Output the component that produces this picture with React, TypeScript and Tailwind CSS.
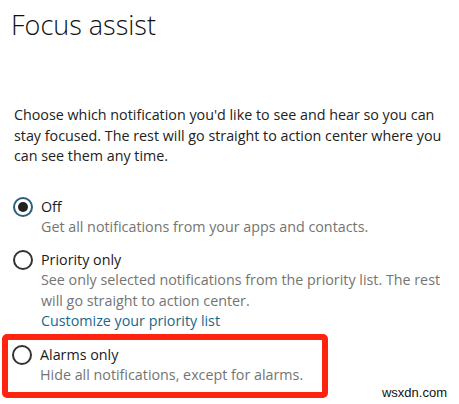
export default function App() {
  return (
    <div
      className="relative w-[459px] h-[404px] overflow-hidden bg-white text-[#1f1f1f]"
      style={{ fontFamily: '"Open Sans", "Noto Sans", sans-serif' }}
    >
      <h1 className="pl-[11px] pt-[5px] text-[27px] leading-[40px] font-light text-[#111]">Focus assist</h1>

      <p className="mt-[60px] pl-[14px] text-[14.3px] leading-[20.5px] text-[#222] whitespace-nowrap">
        Choose which notification you'd like to see and hear so you can
        <br />
        stay focused. The rest will go straight to action center where you
        <br />
        can see them any time.
      </p>

      <div className="mt-[30px] flex flex-col">
        <RadioItem
          checked
          title="Off"
          lines={['Get all notifications from your apps and contacts.']}
        />
        <div className="mt-[12px]">
          <RadioItem
            title="Priority only"
            lines={[
              'See only selected notifications from the priority list. The rest',
              'will go straight to action center.',
            ]}
            link="Customize your priority list"
          />
        </div>
        <div className="mt-[2px] ml-[2px] w-[326px] h-[64px] rounded-[5px] border-[6px] border-[#ff2410] pl-[4px] pt-[5px]">
          <RadioItem title="Alarms only" lines={['Hide all notifications, except for alarms.']} inset />
        </div>
      </div>

      <div
        className="absolute right-[12px] bottom-[3px] text-[13px] leading-[16px] text-[#111]"
        style={{ fontFamily: '"Liberation Sans", Arial, sans-serif' }}
      >
        wsxdn.com
      </div>
    </div>
  )
}

function RadioItem({
  checked,
  title,
  lines,
  link,
  inset,
}: {
  checked?: boolean
  title: string
  lines: string[]
  link?: string
  inset?: boolean
}) {
  return (
    <div className={inset ? 'flex' : 'flex pl-[13px]'}>
      <div className="w-[28px] shrink-0 pt-[0.5px]">
        {checked ? (
          <div className="w-[20px] h-[20px] rounded-full border-2 border-[#2b5f7c] flex items-center justify-center">
            <div className="w-[10px] h-[10px] rounded-full bg-[#222]" />
          </div>
        ) : (
          <div className="w-[20px] h-[20px] rounded-full border-2 border-[#333]" />
        )}
      </div>
      <div className="text-[14.3px] leading-[20.5px] whitespace-nowrap">
        <div className="text-[#1a1a1a]">{title}</div>
        {lines.map((l) => (
          <div key={l} className="text-[#747474]">
            {l}
          </div>
        ))}
        {link && <div className="text-[#17698a]">{link}</div>}
      </div>
    </div>
  )
}
